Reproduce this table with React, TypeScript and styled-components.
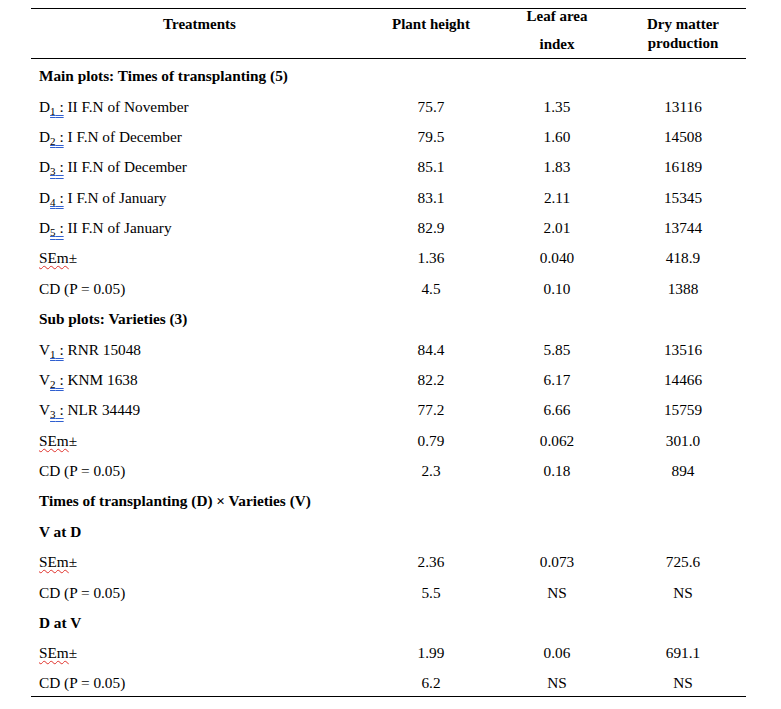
import React from "react";
import styled, { createGlobalStyle } from "styled-components";

const Global = createGlobalStyle`
  html, body { margin: 0; padding: 0; background: #fff; }
  body { font-family: "Liberation Serif", "Times New Roman", serif; color: #000; }
`;

const Page = styled.div`
  padding: 8px 0 0 31px;
`;

const Table = styled.table`
  width: 715px;
  border-collapse: collapse;
  table-layout: fixed;
  font-size: 15.3px;
  border-top: 1px solid #000;
  border-bottom: 1px solid #000;
`;

const HeadRow = styled.tr`
  height: 50px;
  border-bottom: 1px solid #000;
`;

const Th = styled.th<{ $w: number }>`
  width: ${(p) => p.$w}px;
  padding: 0;
  vertical-align: top;
  text-align: center;
  font-weight: bold;
  font-size: 15px;
`;

const HeadLine = styled.div<{ $lh: number; $top: number }>`
  line-height: ${(p) => p.$lh}px;
  margin-top: ${(p) => p.$top}px;
`;

const Row = styled.tr`
  height: 30.38px;
`;

const LabelCell = styled.td<{ $bold?: boolean }>`
  padding: 5px 0 0 8px;
  text-align: left;
  vertical-align: middle;
  font-weight: ${(p) => (p.$bold ? "bold" : "normal")};
  white-space: nowrap;
`;

const ValueCell = styled.td`
  padding: 5px 0 0;
  text-align: center;
  vertical-align: middle;
`;

const Grammar = styled.span`
  text-decoration: underline double #2f5fd0;
  text-underline-offset: 3px;
`;

const Spell = styled.span`
  text-decoration: underline wavy #e0302a;
  text-decoration-thickness: 1px;
  text-underline-offset: 2px;
`;

const Sub = styled.sub`
  font-size: 11px;
  vertical-align: -3px;
  line-height: 0;
`;

type R =
  | { kind: "section"; label: string }
  | { kind: "code"; letter: string; n: string; text: string; v: string[] }
  | { kind: "sem"; v: string[] }
  | { kind: "plain"; label: string; v: string[] };

const rows: R[] = [
  { kind: "section", label: "Main plots: Times of transplanting (5)" },
  { kind: "code", letter: "D", n: "1", text: "II F.N of November", v: ["75.7", "1.35", "13116"] },
  { kind: "code", letter: "D", n: "2", text: "I F.N of December", v: ["79.5", "1.60", "14508"] },
  { kind: "code", letter: "D", n: "3", text: "II F.N of December", v: ["85.1", "1.83", "16189"] },
  { kind: "code", letter: "D", n: "4", text: "I F.N of January", v: ["83.1", "2.11", "15345"] },
  { kind: "code", letter: "D", n: "5", text: "II F.N of January", v: ["82.9", "2.01", "13744"] },
  { kind: "sem", v: ["1.36", "0.040", "418.9"] },
  { kind: "plain", label: "CD (P = 0.05)", v: ["4.5", "0.10", "1388"] },
  { kind: "section", label: "Sub plots: Varieties (3)" },
  { kind: "code", letter: "V", n: "1", text: "RNR 15048", v: ["84.4", "5.85", "13516"] },
  { kind: "code", letter: "V", n: "2", text: "KNM 1638", v: ["82.2", "6.17", "14466"] },
  { kind: "code", letter: "V", n: "3", text: "NLR 34449", v: ["77.2", "6.66", "15759"] },
  { kind: "sem", v: ["0.79", "0.062", "301.0"] },
  { kind: "plain", label: "CD (P = 0.05)", v: ["2.3", "0.18", "894"] },
  { kind: "section", label: "Times of transplanting (D) × Varieties (V)" },
  { kind: "section", label: "V at D" },
  { kind: "sem", v: ["2.36", "0.073", "725.6"] },
  { kind: "plain", label: "CD (P = 0.05)", v: ["5.5", "NS", "NS"] },
  { kind: "section", label: "D at V" },
  { kind: "sem", v: ["1.99", "0.06", "691.1"] },
  { kind: "plain", label: "CD (P = 0.05)", v: ["6.2", "NS", "NS"] },
];

function Values({ v }: { v: string[] }) {
  return (
    <>
      {v.map((x, i) => (
        <ValueCell key={i}>{x}</ValueCell>
      ))}
    </>
  );
}

export default function App() {
  return (
    <Page>
      <Global />
      <Table>
        <thead>
          <HeadRow>
            <Th $w={337}>
              <HeadLine $lh={19} $top={6}>Treatments</HeadLine>
            </Th>
            <Th $w={126}>
              <HeadLine $lh={19} $top={6}>Plant height</HeadLine>
            </Th>
            <Th $w={126}>
              <HeadLine $lh={28} $top={-7}>Leaf area</HeadLine>
              <HeadLine $lh={28} $top={0}>index</HeadLine>
            </Th>
            <Th $w={126}>
              <HeadLine $lh={19} $top={6}>Dry matter</HeadLine>
              <HeadLine $lh={19} $top={0}>production</HeadLine>
            </Th>
          </HeadRow>
        </thead>
        <tbody>
          {rows.map((r, i) => {
            if (r.kind === "section")
              return (
                <Row key={i}>
                  <LabelCell $bold>{r.label}</LabelCell>
                  <ValueCell />
                  <ValueCell />
                  <ValueCell />
                </Row>
              );
            if (r.kind === "code")
              return (
                <Row key={i}>
                  <LabelCell>
                    {r.letter}
                    <Grammar>
                      <Sub>{r.n}</Sub> :
                    </Grammar>{" "}
                    {r.text}
                  </LabelCell>
                  <Values v={r.v} />
                </Row>
              );
            if (r.kind === "sem")
              return (
                <Row key={i}>
                  <LabelCell>
                    <Spell>SEm</Spell>±
                  </LabelCell>
                  <Values v={r.v} />
                </Row>
              );
            return (
              <Row key={i}>
                <LabelCell>{r.label}</LabelCell>
                <Values v={r.v} />
              </Row>
            );
          })}
        </tbody>
      </Table>
    </Page>
  );
}
